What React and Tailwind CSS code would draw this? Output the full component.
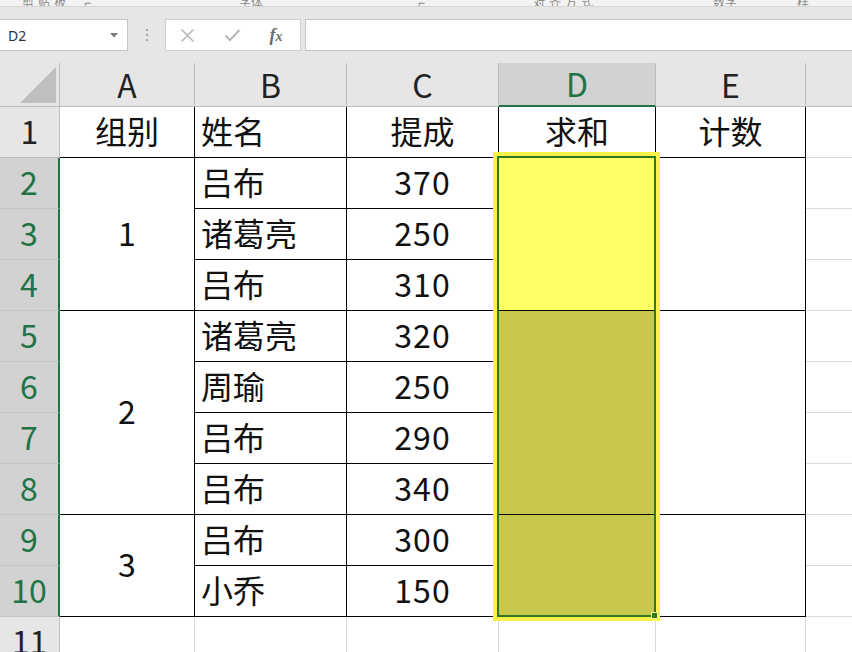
import React from "react";

const groups = [
  { label: "1", span: 3 },
  { label: "2", span: 4 },
  { label: "3", span: 2 },
];
const spanCls = { 2: "row-span-2", 3: "row-span-3", 4: "row-span-4" };

const names = ["吕布", "诸葛亮", "吕布", "诸葛亮", "周瑜", "吕布", "吕布", "吕布", "小乔"];
const amounts = [370, 250, 310, 320, 250, 290, 340, 300, 150];

const cell = "flex items-center justify-center pb-[5px] border-r border-b border-black";
const leftCell = "flex items-center justify-start pl-[6px] pb-[5px] border-r border-b border-black";

function RowHeader({ n, selected }) {
  return selected ? (
    <div className="flex items-center justify-center pb-[4px] bg-[#d2d2d2] border-r-2 border-r-[#217346] border-b border-b-[#c4c4c4] text-[#217346]">
      {n}
    </div>
  ) : (
    <div className="flex items-center justify-center pb-[4px] bg-[#e6e6e6] border-r border-b border-[#bdbdbd] text-[#222]">
      {n}
    </div>
  );
}

function buildCells() {
  const out = [];
  // row 1 (titles)
  out.push(<RowHeader key="h1" n={1} />);
  out.push(<div key="a1" className={cell}>组别</div>);
  out.push(<div key="b1" className={leftCell}>姓名</div>);
  out.push(<div key="c1" className={cell}>提成</div>);
  out.push(<div key="d1" className={cell}>求和</div>);
  out.push(<div key="e1" className={cell}>计数</div>);
  out.push(<div key="f1" className="border-b border-[#d9d9d9]" />);

  let idx = 0;
  groups.forEach((g, gi) => {
    for (let k = 0; k < g.span; k++) {
      const r = idx + 2;
      out.push(<RowHeader key={`h${r}`} n={r} selected />);
      if (k === 0) {
        out.push(
          <div key={`a${r}`} className={`${cell} ${spanCls[g.span]}`}>
            {g.label}
          </div>
        );
      }
      out.push(
        <div key={`b${r}`} className={leftCell}>
          {names[idx]}
        </div>
      );
      out.push(
        <div key={`c${r}`} className={`${cell} tracking-[1px]`}>
          {amounts[idx]}
        </div>
      );
      if (k === 0) {
        out.push(
          <div
            key={`d${r}`}
            className={`${cell} ${spanCls[g.span]} ${gi === 0 ? "bg-[#ffff66]" : "bg-[#c8c74e]"}`}
          />
        );
        out.push(<div key={`e${r}`} className={`${cell} ${spanCls[g.span]}`} />);
      }
      out.push(<div key={`f${r}`} className="border-b border-[#d9d9d9]" />);
      idx++;
    }
  });

  // row 11
  out.push(<RowHeader key="h11" n={11} />);
  ["a", "b", "c", "d", "e"].forEach((c) => {
    out.push(<div key={`${c}11`} className="border-r border-[#d9d9d9]" />);
  });
  out.push(<div key="f11" />);
  return out;
}

function ColHeader({ label, selected }) {
  return selected ? (
    <div className="flex items-center justify-center pb-[2px] bg-[#d2d2d2] border-r border-r-[#bdbdbd] border-b-2 border-b-[#217346] text-[#217346]">
      {label}
    </div>
  ) : (
    <div className="flex items-center justify-center pb-[2px] bg-[#e6e6e6] border-r border-b border-[#bdbdbd] text-[#222]">
      {label}
    </div>
  );
}

function RibbonRemnants() {
  return (
    <div className="h-[7px] bg-[#f3f3f3] border-b border-[#d6d6d6] overflow-hidden flex items-end text-[12px] leading-[16px] text-[#8a8a8a] font-['Noto_Sans_CJK_SC',sans-serif]">
      <span className="ml-[22px] mb-[-4px] tracking-[4px]">剪贴板</span>
      <span className="ml-[14px] mb-[-4px]">⌐</span>
      <span className="ml-[148px] mb-[-4px]">字体</span>
      <span className="ml-[155px] mb-[-4px]">⌐</span>
      <span className="ml-[108px] mb-[-4px] tracking-[4px]">对齐方式</span>
      <span className="ml-[116px] mb-[-4px]">数字</span>
      <span className="ml-[60px] mb-[-4px]">样</span>
    </div>
  );
}

function FormulaBar() {
  return (
    <div className="h-[56px] bg-[#e6e6e6] flex items-start pt-[12px]">
      <div className="w-[128px] h-[32px] bg-white border border-[#c6c6c6] border-l-0 flex items-center justify-between pl-[8px] pr-[9px]">
        <span className="text-[14px] text-[#333] font-['Noto_Sans',sans-serif]">D2</span>
        <svg width="8" height="5" viewBox="0 0 8 5">
          <path d="M0 0 L8 0 L4 4.5 Z" fill="#7a7a7a" />
        </svg>
      </div>
      <div className="w-[37px] h-[32px] flex flex-col items-center justify-center gap-[3px]">
        <span className="w-[2px] h-[2px] bg-[#a3a3a3]" />
        <span className="w-[2px] h-[2px] bg-[#a3a3a3]" />
        <span className="w-[2px] h-[2px] bg-[#a3a3a3]" />
      </div>
      <div className="w-[136px] h-[32px] bg-white border border-[#d0d0d0] flex items-center">
        <div className="w-[42px] flex justify-center">
          <svg width="15" height="15" viewBox="0 0 15 15">
            <path d="M1.5 1.5 L13.5 13.5 M13.5 1.5 L1.5 13.5" stroke="#b8b8b8" strokeWidth="1.6" />
          </svg>
        </div>
        <div className="w-[48px] flex justify-center">
          <svg width="17" height="14" viewBox="0 0 17 14">
            <path d="M1.5 7.5 L6 12 L15.5 2" stroke="#b8b8b8" strokeWidth="2" fill="none" />
          </svg>
        </div>
        <div className="w-[40px] flex justify-center items-baseline font-['Liberation_Serif',serif] italic text-[#6b6b6b] font-bold">
          <span className="text-[18px]">f</span>
          <span className="text-[14px]">x</span>
        </div>
      </div>
      <div className="flex-1 ml-[4px] h-[32px] bg-white border border-[#c6c6c6] border-r-0" />
    </div>
  );
}

export default function App() {
  return (
    <div className="w-[852px] h-[652px] overflow-hidden bg-white">
      <RibbonRemnants />
      <FormulaBar />
      <div className="relative grid grid-cols-[60px_135px_152px_152px_157px_150px_1fr] grid-rows-[44px_repeat(11,51px)] text-[32px] leading-none text-[#111] font-['Noto_Sans_CJK_SC','Noto_Sans',sans-serif]">
        <div className="bg-[#e6e6e6] border-r border-b border-[#bdbdbd] flex items-end justify-end pr-[3px] pb-[3px]">
          <svg width="36" height="36" viewBox="0 0 36 36">
            <path d="M0 36 L36 36 L36 0 Z" fill="#bfbfbf" />
          </svg>
        </div>
        <ColHeader label="A" />
        <ColHeader label="B" />
        <ColHeader label="C" />
        <ColHeader label="D" selected />
        <ColHeader label="E" />
        <div className="bg-[#e6e6e6] border-b border-[#bdbdbd]" />
        {buildCells()}
        {/* selection border over D2:D10 */}
        <div className="absolute col-[5/6] row-[3/12] -left-[2px] -top-[2px] right-0 bottom-0 border-2 border-[#2b7a22] shadow-[0_0_0_4px_#fff04a] pointer-events-none">
          <div className="absolute -right-[4px] -bottom-[4px] w-[7px] h-[7px] bg-[#2b7a22] border border-[#f6f08a]" />
        </div>
      </div>
    </div>
  );
}
